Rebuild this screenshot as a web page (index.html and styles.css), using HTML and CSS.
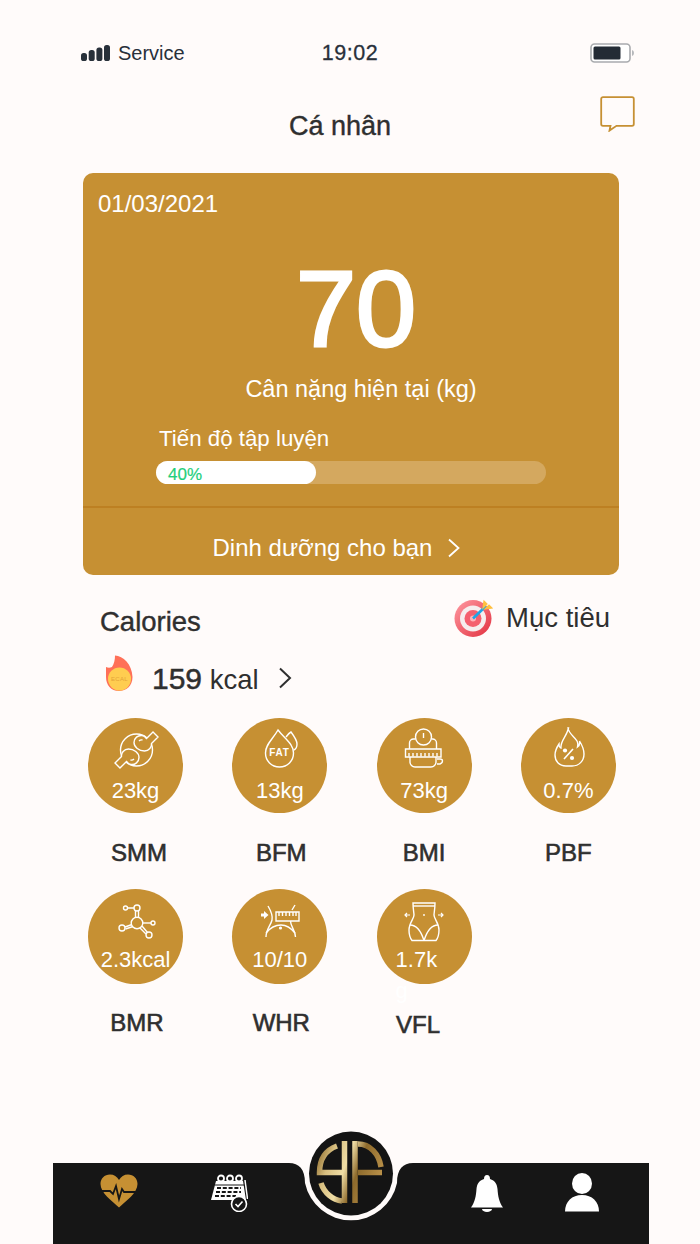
FILE: index.html
```html
<!DOCTYPE html>
<html lang="vi">
  <head>
    <meta charset="UTF-8" />
    <meta name="viewport" content="width=device-width, initial-scale=1.0" />
    <title>Cá nhân</title>
    <link rel="stylesheet" href="styles.css">
  </head>
  <body>
    <div class="status-bar">
      <div class="status-left">
        <svg class="signal" width="29" height="17" viewBox="0 0 29 17">
          <rect x="0" y="8" width="6" height="8" rx="2.600" />
          <rect x="7.700" y="5" width="6" height="11" rx="2.600" />
          <rect x="15.400" y="2.500" width="6" height="13.500" rx="2.600" />
          <rect x="23" y="0" width="6" height="16" rx="2.600" />
        </svg>
        <span>Service</span>
      </div>
      <div class="status-time">19:02</div>
      <svg class="battery" width="45" height="20" viewBox="0 0 45 20">
        <rect x="1" y="1" width="39" height="18" rx="3.500" fill="#fff" stroke="#a9abae" stroke-width="1.600" />
        <rect x="3.500" y="3.500" width="27" height="13" rx="1.500" fill="#232b35" />
        <path d="M42 7q2 .6 2 3t-2 3z" fill="#b6b8bb" />
      </svg>
    </div>

    <header class="page-head">
      <h1>Cá nhân</h1>
      <svg class="chat-icon" width="35" height="36" viewBox="0 0 35 36">
        <path d="M3 1.200h29a1.800 1.800 0 0 1 1.800 1.800v25a1.800 1.800 0 0 1-1.800 1.800H16.500L9.500 34.600l1-4.800H3A1.800 1.800 0 0 1 1.200 28V3A1.800 1.800 0 0 1 3 1.200z" fill="none" stroke="#c69033" stroke-width="1.800" />
      </svg>
    </header>

    <section class="weight-card">
      <div class="card-date">01/03/2021</div>
      <div class="card-weight">70</div>
      <div class="card-caption">Cân nặng hiện tại (kg)</div>
      <div class="progress-label">Tiến độ tập luyện</div>
      <div class="progress-track">
        <div class="progress-fill" style="width: 41%">40%</div>
      </div>
      <div class="card-footer">
        <span>Dinh dưỡng cho bạn</span>
        <svg width="14" height="20" viewBox="0 0 14 20"><path d="M2 1.500L11.500 10 2 18.500" fill="none" stroke="#fff" stroke-width="1.800" /></svg>
      </div>
    </section>

    <section class="calories">
      <div class="calories-left">
        <h2>Calories</h2>
        <div class="kcal-row">
          <svg class="kcal-flame" width="28" height="37" viewBox="0 0 28 37">
            <path d="M10 .5C18 1 27 9 27.500 22 27.500 31 21 36 14 36 6 36 1 30 1 22V12c2 1 4 1 6 0C9 9 10 5 10 .5z" fill="#ff7058" />
            <circle cx="14.500" cy="24" r="11.500" fill="#ffcd50" />
            <text x="14.500" y="26" class="kcal-flame-text">ECAL</text>
          </svg>
          <div class="kcal-value"><strong>159</strong> kcal</div>
          <svg class="kcal-chevron" width="14" height="22" viewBox="0 0 14 22"><path d="M2 1.500L12 11 2 20.500" fill="none" stroke="#2f2f2f" stroke-width="2" /></svg>
        </div>
      </div>
      <div class="goal">
        <svg width="39" height="38" viewBox="0 0 39 38">
          <defs>
            <linearGradient id="targetRed" x1="0" y1="0" x2="1" y2="1">
              <stop offset="0" stop-color="#ff9aa2" />
              <stop offset="1" stop-color="#e2303f" />
            </linearGradient>
          </defs>
          <circle cx="19" cy="19.500" r="18.500" fill="url(#targetRed)" />
          <circle cx="19" cy="19.500" r="13" fill="#f6eeee" />
          <circle cx="19" cy="19.500" r="8.500" fill="#f4606e" />
          <circle cx="19" cy="19.500" r="3" fill="#ffb3b8" />
          <path d="M19 19.500L32 7" stroke="#1ea6e6" stroke-width="2.600" />
          <path d="M29 9l1-7 3 3zM31 10l7-1-3-3z" fill="#ffc040" stroke="#ffc040" stroke-width="1.200" />
        </svg>
        <span>Mục tiêu</span>
      </div>
    </section>

    <section class="metrics">
      <div class="metric">
        <div class="metric-circle">
          <svg class="metric-icon" viewBox="0 0 48 48" width="48" height="48">
            <circle cx="24.500" cy="23" r="16" />
            <path d="M34.500 11.500L41 5l5 5-6.500 6.500C40 20 37 24 32.500 24 27 24 22 20 22 15.500 22 11 26 8 30 8.500c2 0 3.500 1.500 4.500 3z" class="icon-bg" />
            <path d="M14.500 34.500L8 41l-5-5 6.500-6.500C9 26 12 22 16.500 22 22 22 27 26 27 30.500 27 35 23 38 19 37.500c-2 0-3.500-1.500-4.500-3z" class="icon-bg" />
            <path d="M27 14q1.500-1.500 3.500-1M22 32q-1.500 1.500-3.500 1" />
          </svg>
          <div class="metric-value">23kg</div>
        </div>
        <div class="metric-label metric-label--smm">SMM</div>
      </div>

      <div class="metric">
        <div class="metric-circle">
          <svg class="metric-icon" viewBox="0 0 48 48" width="48" height="48">
            <path d="M22 3c-5 9-12.500 14-12.500 23 0 8 6 14 14 14s14-6 14-14c0-9-8.500-14-15.500-23z" />
            <path d="M30 10c1.500-2 3-4 5-5 3 4 6 8 6 12 0 3-1 5-3 6" />
            <text x="23.500" y="28.500" class="fat-text">FAT</text>
          </svg>
          <div class="metric-value">13kg</div>
        </div>
        <div class="metric-label metric-label--bfm">BFM</div>
      </div>

      <div class="metric">
        <div class="metric-circle">
          <svg class="metric-icon" viewBox="0 0 48 48" width="48" height="48">
            <circle cx="23.500" cy="10" r="8" />
            <path d="M23.500 6v5" />
            <path d="M15.500 12h-2a4 4 0 0 0-4 4v6M31.500 12h1a4 4 0 0 1 4 4v6" />
            <path d="M5.500 22h35.500v8H5.500z" />
            <path d="M9 26v3.500M13 26v3.500M17 26v3.500M21 26v3.500M25 26v3.500M29 26v3.500M33 26v3.500M37 26v3.500" />
            <path d="M10 30v5a5 5 0 0 0 5 5h16a5 5 0 0 0 5-5v-5M37 32h3q2.500 0 2.500 2t-2.500 3h-3" />
          </svg>
          <div class="metric-value">73kg</div>
        </div>
        <div class="metric-label">BMI</div>
      </div>

      <div class="metric">
        <div class="metric-circle">
          <svg class="metric-icon" viewBox="0 0 48 48" width="48" height="48">
            <path d="M24 1c1 6 6 8 9 13 1 2 1 4 .500 6 2-1.500 2.500-3.500 2-6 2.500 4 4.500 8 4.500 13 0 7-5 12-12 12h-6c-7 0-11-5-11-11 0-5 2-8 4-11 0 2 1 4 2 4-1-7 6-12 7.500-20z" />
            <path d="M20 32l9-10" stroke-width="1.600" />
            <circle cx="21" cy="23.500" r="2.100" class="icon-solid" />
            <circle cx="28" cy="31" r="2.100" class="icon-solid" />
          </svg>
          <div class="metric-value">0.7%</div>
        </div>
        <div class="metric-label">PBF</div>
      </div>

      <div class="metric">
        <div class="metric-circle metric-circle--low">
          <svg class="metric-icon" viewBox="0 0 48 48" width="48" height="48">
            <circle cx="25" cy="12" r="3" />
            <circle cx="13.500" cy="12" r="2" />
            <path d="M15.500 12H22M23.500 15v6.500M26.500 15v6.500" />
            <circle cx="25" cy="27" r="5.800" />
            <circle cx="10" cy="32" r="3" />
            <path d="M13 31l7-2.500M13.500 33l7.500-2.500" />
            <circle cx="41" cy="27" r="2" />
            <path d="M31 27h8" />
            <circle cx="37" cy="39" r="3" />
            <path d="M30 30l5.500 6.500M28 32l6 6" />
          </svg>
          <div class="metric-value">2.3kcal</div>
        </div>
        <div class="metric-label metric-label--bmr">BMR</div>
      </div>

      <div class="metric">
        <div class="metric-circle metric-circle--low">
          <svg class="metric-icon" viewBox="0 0 48 48" width="48" height="48">
            <path d="M12 10c3 5 5 9 4 14-1 5-6 9-6 17M39 9l-3 5M34.500 25c0 6 5 9 5 16" />
            <path d="M10 37c4-5 9-8 15-8s10 3 14 8" />
            <path d="M20 16h23v9H20z" />
            <path d="M23 16v4M26.500 16v4M30 16v4M33.500 16v4M37 16v4M40 16v4" />
            <circle cx="24.500" cy="32" r="1.600" class="icon-solid" />
            <path d="M5 17.500h3v-2.500l4.500 4-4.500 4v-2.500H5z" class="icon-solid" />
          </svg>
          <div class="metric-value">10/10</div>
        </div>
        <div class="metric-label metric-label--whr">WHR</div>
      </div>

      <div class="metric">
        <div class="metric-circle metric-circle--low">
          <svg class="metric-icon" viewBox="0 0 48 48" width="48" height="48">
            <path d="M13 7h22c0 6-1 10-1 12 0 4 5 8 5 15 0 4-1 8-3 10.500H12c-2-2.500-3-6.500-3-10.500 0-7 5-11 5-15 0-2-1-6-1-12z" />
            <path d="M13 10h22" />
            <path d="M10 29c6 0 11 6 14 15.500M38 29c-6 0-11 6-14 15.500" />
            <circle cx="24" cy="19" r=".9" class="icon-solid" />
            <path d="M5 19h5M7 17l-2 2 2 2M38 19h5M41 17l2 2-2 2" stroke-width="1.200" />
          </svg>
          <div class="metric-value metric-value--wrap">1.7kg</div>
        </div>
        <div class="metric-label metric-label--vfl">VFL</div>
      </div>
    </section>

    <nav class="tab-bar">
      <div class="tab-group tab-group--left">
        <svg width="38" height="34" viewBox="0 0 38 34">
          <path d="M19 33.500C12 27 .5 19 .5 10 .5 4.500 4.500.5 10 .5c4 0 7 2 9 5.500 2-3.500 5-5.500 9-5.500 5.500 0 9.500 4 9.500 9.500 0 9-11.500 17-18.500 23.500z" fill="#c69033" />
          <path d="M1 17h9l3 3 3-8 3 13 3-10 2 3h13" fill="none" stroke="#161616" stroke-width="1.800" />
        </svg>
        <svg width="38" height="38" viewBox="0 0 38 38">
          <path d="M6 7h27l3 19H1z" fill="#fff" />
          <path d="M4.500 11h29.500" stroke="#161616" stroke-width="1" />
          <path d="M35 6l2.500 19" stroke="#fff" stroke-width="1.500" />
          <circle cx="11" cy="4.500" r="3" fill="#161616" stroke="#fff" stroke-width="1.800" />
          <circle cx="20" cy="4.500" r="3" fill="#161616" stroke="#fff" stroke-width="1.800" />
          <circle cx="29" cy="4.500" r="3" fill="#161616" stroke="#fff" stroke-width="1.800" />
          <path d="M7 14h24M6 18h25M5 22h21" stroke="#161616" stroke-width="2" stroke-dasharray="4 1.800" />
          <circle cx="29" cy="30" r="7.500" fill="#161616" stroke="#fff" stroke-width="1.600" />
          <path d="M25.500 30l2.500 2.500 4.500-5" fill="none" stroke="#fff" stroke-width="1.600" />
          <path d="M26 21.500h6" stroke="#fff" stroke-width="1.500" />
        </svg>
      </div>
      <div class="tab-group tab-group--right">
        <svg width="32" height="37" viewBox="0 0 32 37">
          <path d="M16 0c2 0 3 1.500 3 4 5 1.500 7 5 7.500 10 .5 7 1.500 13 5.500 18.500H0C4 27 5 21 5.500 14 6 9 8 5.500 13 4c0-2.500 1-4 3-4z" fill="#fff" />
          <path d="M11 34h10a5 3 0 0 1-10 0z" fill="#fff" />
        </svg>
        <svg width="34" height="39" viewBox="0 0 34 39">
          <ellipse cx="17" cy="10.500" rx="10" ry="10.500" fill="#fff" />
          <path d="M0 38.500c0-10 7-16.500 17-16.500s17 6.500 17 16.500z" fill="#fff" />
        </svg>
      </div>

      <svg class="tab-logo" width="130" height="100" viewBox="0 0 130 100">
        <defs>
          <linearGradient id="logoGold" gradientUnits="userSpaceOnUse" x1="30" y1="30" x2="100" y2="55">
            <stop offset="0" stop-color="#8f6d2e" />
            <stop offset="0.2" stop-color="#d8bf80" />
            <stop offset="0.42" stop-color="#f0dea6" />
            <stop offset="0.6" stop-color="#8d6a2c" />
            <stop offset="1" stop-color="#c49a50" />
          </linearGradient>
        </defs>
        <path d="M0 38h3c10 0 16 6 16 20A47 47 0 0 0 111 58c0-14 6-20 16-20h3V0H0z" fill="#fffbfa" />
        <circle cx="65" cy="48.500" r="42" fill="#141414" />
        <g fill="none" stroke="url(#logoGold)" stroke-width="5.500">
          <path d="M58.500 16v62M69 16v62" />
          <path d="M51 21C40 25 33.500 34 33.500 47.500H56" />
          <path d="M35 58c3 10 12 17 21 18" />
          <path d="M72 19c12 0 21 10 23 23" />
          <path d="M72 47.500h24" />
        </g>
      </svg>
    </nav>
  </body>
</html>
```

FILE: styles.css
```css
* {
  box-sizing: border-box;
}

body {
  margin: 0;
  width: 700px;
  height: 1244px;
  overflow: hidden;
  display: flex;
  flex-direction: column;
  background-color: #fffbfa;
  color: #2f2f2f;
  font-family: "Liberation Sans", Arial, sans-serif;
}

/* status bar */
.status-bar {
  display: grid;
  grid-template-columns: 1fr auto 1fr;
  align-items: center;
  height: 26px;
  margin-top: 40px;
  padding: 0 65px;
  color: #28303a;
}
.status-left {
  display: flex;
  align-items: center;
  gap: 8px;
  margin-left: 16px;
  font-size: 20px;
}
.signal {
  fill: #28303a;
}
.status-time {
  margin-top: 1px;
  font-size: 21.500px;
  letter-spacing: 0.5px;
  -webkit-text-stroke: 0.3px #28303a;
}
.battery {
  justify-self: end;
}

/* title row */
.page-head {
  display: flex;
  justify-content: space-between;
  align-items: flex-start;
  height: 46px;
  margin-top: 30px;
  padding: 0 65px 0 289px;
}
.page-head h1 {
  margin: 13px 0 0;
  font-size: 27px;
  line-height: 34px;
  font-weight: 400;
  -webkit-text-stroke: 0.4px #2f2f2f;
}

/* main card */
.weight-card {
  display: flex;
  flex-direction: column;
  height: 402px;
  margin: 31px 81px 0 83px;
  border-radius: 10px;
  background-color: #c69033;
  color: #fff;
}
.card-date {
  margin: 17px 0 0 15px;
  font-size: 24px;
  line-height: 27px;
}
.card-weight {
  margin-top: 37px;
  padding-left: 10px;
  text-align: center;
  font-size: 108px;
  line-height: 110px;
  -webkit-text-stroke: 3px #fff;
}
.card-caption {
  margin-top: 10px;
  padding-left: 20px;
  text-align: center;
  font-size: 23.500px;
  line-height: 30px;
}
.progress-label {
  margin: 21px 0 0 76px;
  font-size: 22.300px;
  line-height: 28px;
}
.progress-track {
  width: 390px;
  height: 23px;
  margin: 8px 0 0 73px;
  border-radius: 12px;
  background-color: #d4a85f;
}
.progress-fill {
  height: 23px;
  padding: 4px 0 0 12px;
  border-radius: 12px;
  background-color: #fff;
  color: #1fcf7b;
  font-size: 17px;
  line-height: 19px;
  -webkit-text-stroke: 0.2px #1fcf7b;
}
.card-footer {
  display: flex;
  justify-content: center;
  align-items: center;
  gap: 15px;
  flex: 1;
  margin-top: 22px;
  padding: 12px 28px 0 0;
  border-top: 2px solid #bd8022;
  font-size: 24px;
}

/* calories and goal */
.calories {
  display: flex;
  justify-content: space-between;
  align-items: flex-start;
  height: 143px;
  padding: 24px 90px 0 100px;
}
.calories h2 {
  margin: 6px 0 0;
  font-size: 27.500px;
  line-height: 34px;
  font-weight: 400;
  -webkit-text-stroke: 0.4px #2f2f2f;
}
.kcal-row {
  display: flex;
  align-items: flex-start;
  gap: 19px;
  margin: 16px 0 0 5px;
}
.kcal-value {
  margin-top: 6px;
  font-size: 27.500px;
  line-height: 36px;
}
.kcal-value strong {
  font-size: 30px;
  font-weight: 400;
  -webkit-text-stroke: 0.5px #2f2f2f;
}
.kcal-chevron {
  margin-top: 12px;
}
.kcal-flame-text {
  font-size: 6px;
  fill: #e5a438;
  text-anchor: middle;
  letter-spacing: 0.3px;
}
.goal {
  display: flex;
  align-items: center;
  gap: 13px;
  font-size: 27.500px;
}

/* metric grid */
.metrics {
  display: grid;
  grid-template-columns: repeat(4, 95px);
  grid-auto-rows: 171px;
  column-gap: 49.300px;
  padding-left: 88px;
}
.metric {
  display: flex;
  flex-direction: column;
  align-items: center;
}
.metric-circle {
  display: flex;
  flex-direction: column;
  align-items: center;
  flex: none;
  width: 95px;
  height: 95px;
  padding-top: 9px;
  border-radius: 50%;
  background-color: #c69033;
  color: #fff;
}
.metric-circle--low {
  padding-top: 7px;
}
.metric-icon {
  flex: none;
  fill: none;
  stroke: #fff;
  stroke-width: 1.400;
}
.icon-bg {
  fill: #c69033;
}
.icon-solid {
  fill: #fff;
  stroke: none;
}
.fat-text {
  fill: #fff;
  stroke: none;
  font-size: 10px;
  font-weight: 700;
  letter-spacing: 0.8px;
  text-anchor: middle;
}
.metric-value {
  flex: none;
  margin-top: 3px;
  font-size: 22px;
  line-height: 26px;
}
.metric-value--wrap {
  width: 50px;
  margin: 0 7px 0 0;
  line-height: 31px;
  word-break: break-all;
}
.metric-label {
  margin-top: 25px;
  font-size: 24px;
  line-height: 30px;
  -webkit-text-stroke: 0.6px #2f2f2f;
}
.metric-circle--low + .metric-label {
  margin-top: 24px;
}
.metric-label--smm {
  margin-left: 7px;
}
.metric-label--bfm,
.metric-label--bmr,
.metric-label--whr {
  margin-left: 3px;
}
.metric-circle--low + .metric-label--vfl {
  margin: 26px 12px 0 0;
}

/* bottom bar */
.tab-bar {
  position: relative;
  display: flex;
  justify-content: space-between;
  align-items: flex-start;
  height: 81px;
  margin: auto 51px 0 53px;
  padding: 10px 50px 0 47px;
  background-color: #161616;
}
.tab-group {
  display: flex;
  align-items: flex-start;
}
.tab-group--left {
  gap: 72px;
  padding-top: 1px;
}
.tab-group--right {
  gap: 62px;
}
.tab-group--right svg:first-child {
  margin-top: 2px;
}
.tab-logo {
  position: absolute;
  left: 233px;
  top: -38px;
}
```
